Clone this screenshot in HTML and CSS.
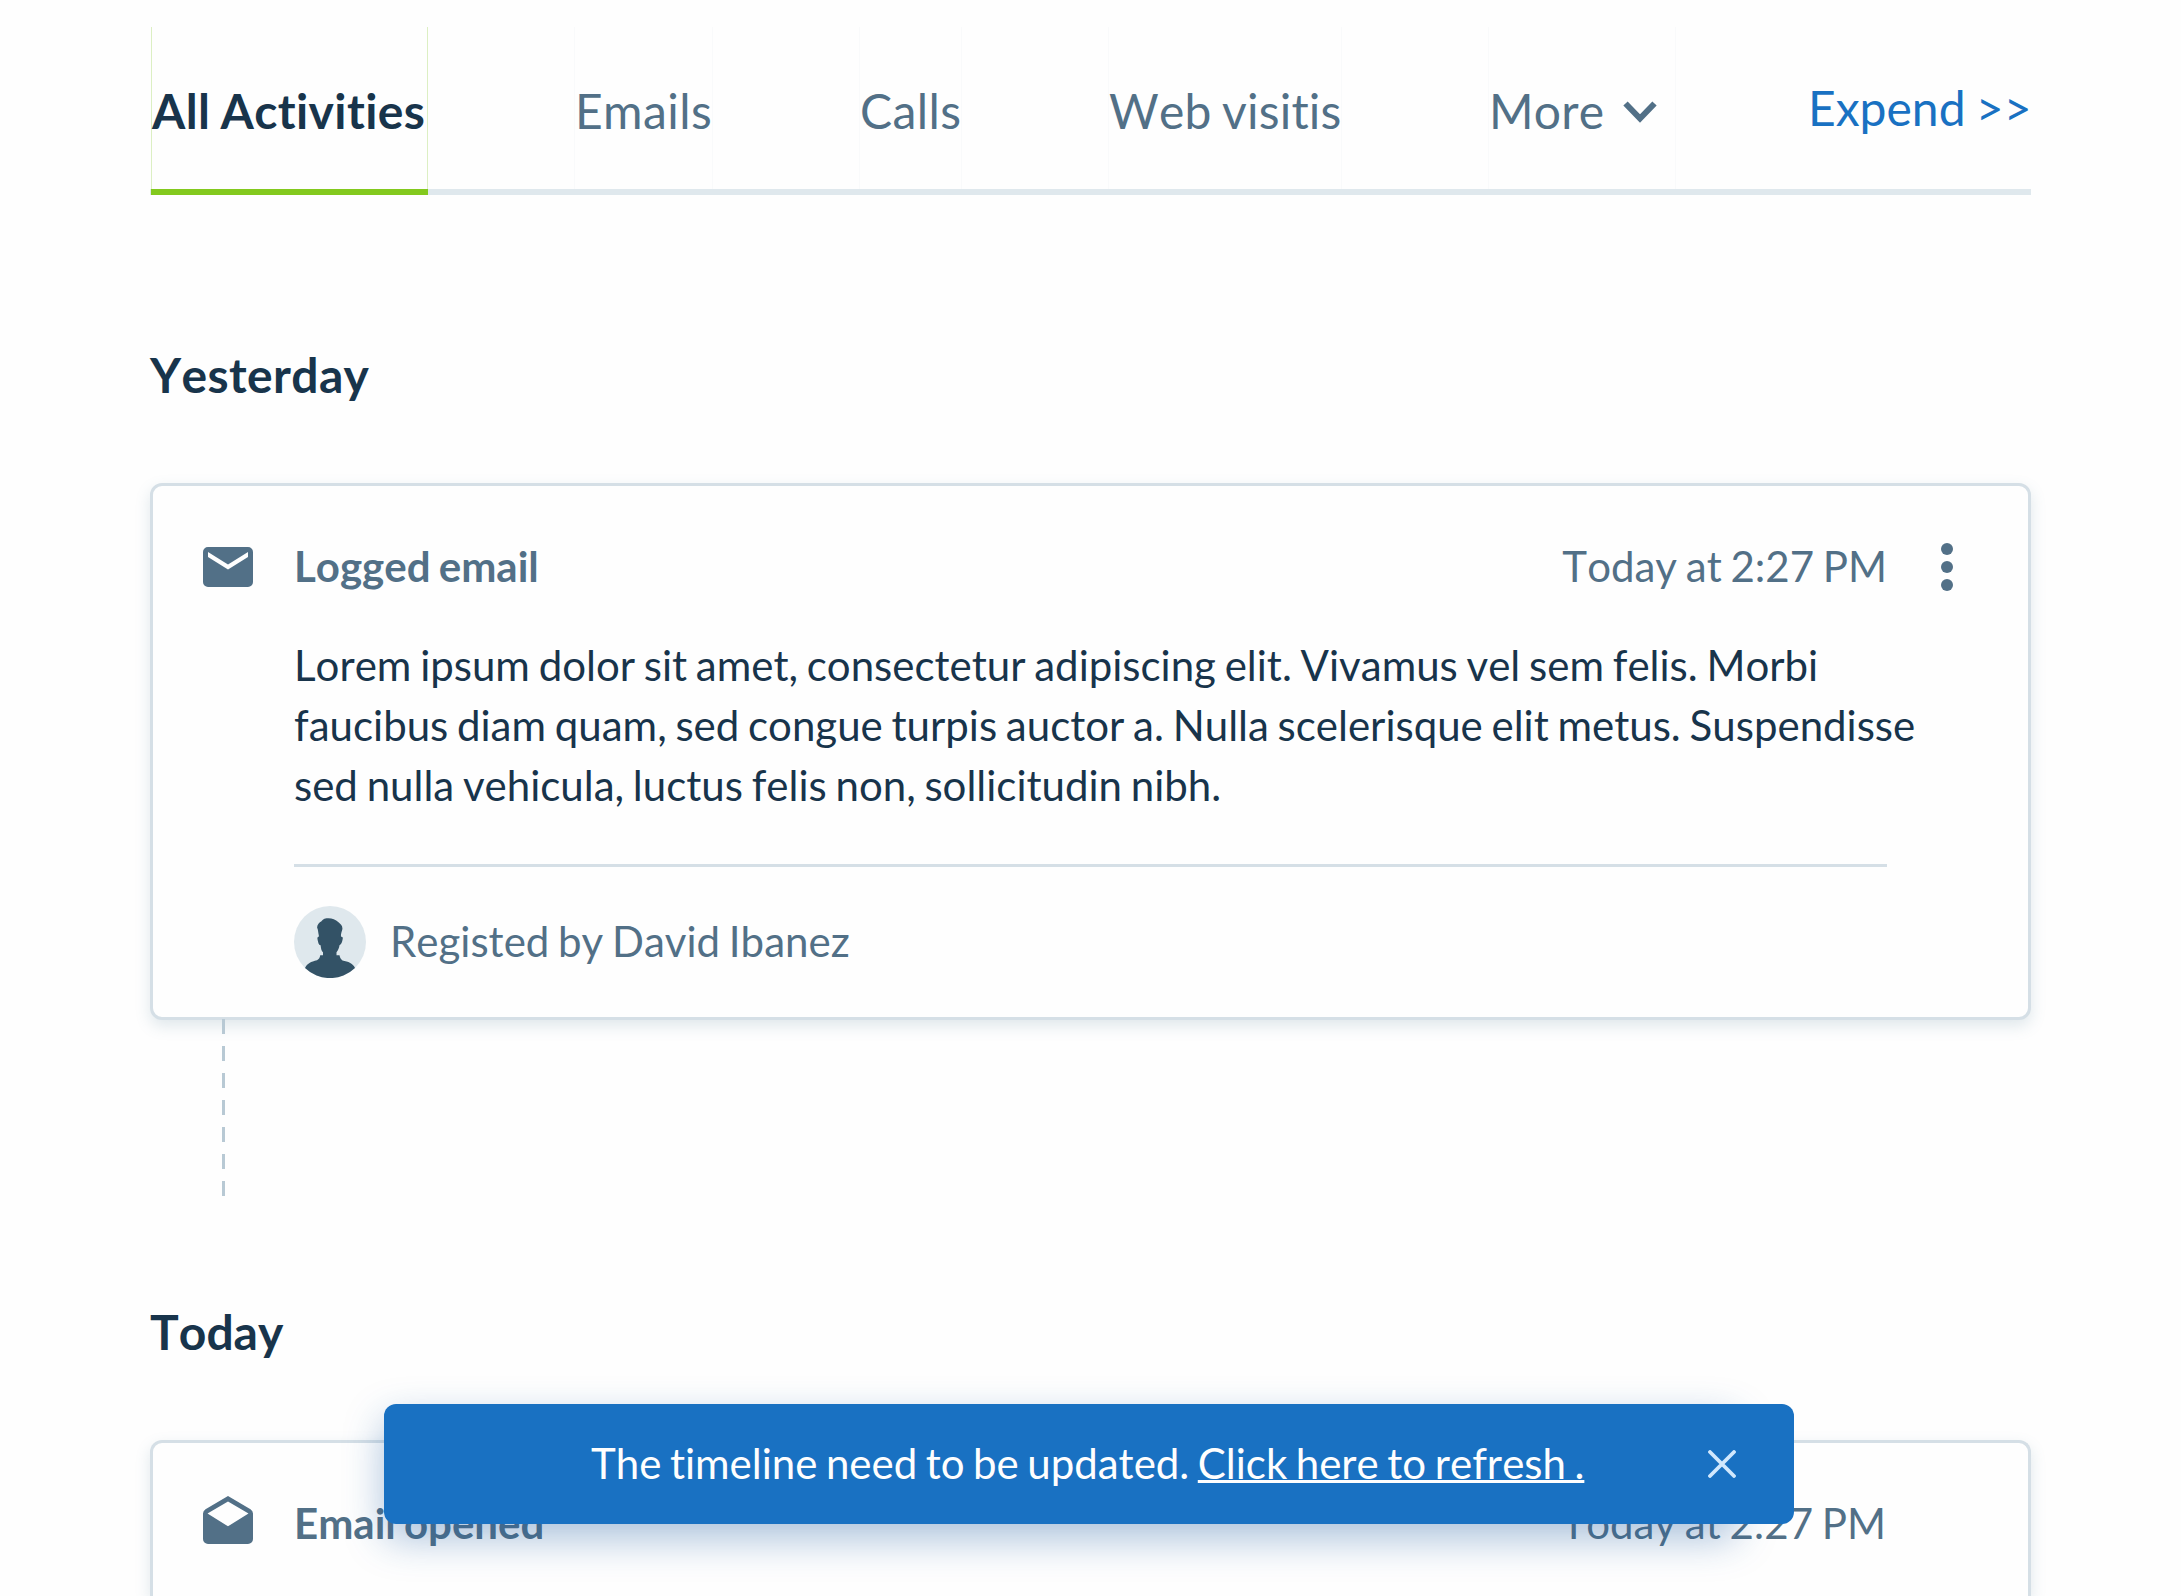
FILE: index.html
```html
<!DOCTYPE html>
<html lang="en">
<head>
<meta charset="utf-8">
<title>Activities</title>
<link rel="stylesheet" href="styles.css">
</head>
<body>
<main class="timeline">
  <nav class="tabs">
    <a class="tab all active"><span>All Activities</span></a>
    <a class="tab emails"><span>Emails</span></a>
    <a class="tab calls"><span>Calls</span></a>
    <a class="tab visits"><span>Web visitis</span></a>
    <a class="tab more"><span>More</span>
      <svg class="chevron" viewBox="0 0 34 22"><path d="M2.500 2.500 17 17.500 31.500 2.500" fill="none" stroke="currentColor" stroke-width="6"/></svg>
    </a>
    <a class="expand"><span>Expend &gt;&gt;</span></a>
  </nav>

  <h2 class="day yesterday">Yesterday</h2>
  <article class="card">
    <div class="icon">
      <svg width="50" height="40" viewBox="0 0 50 40"><path fill="currentColor" fill-rule="evenodd" d="M5 0H45a5 5 0 0 1 5 5V35a5 5 0 0 1-5 5H5a5 5 0 0 1-5-5V5a5 5 0 0 1 5-5ZM25 17.500 5 5V10L25 22.500 45 10V5Z"/></svg>
    </div>
    <div class="body">
      <header class="head">
        <h3 class="title">Logged email</h3>
        <time class="time">Today at 2:27 PM</time>
        <svg class="dots" width="12" height="48" viewBox="0 0 12 48" fill="currentColor"><circle cx="6" cy="6" r="6"/><circle cx="6" cy="24" r="6"/><circle cx="6" cy="42" r="6"/></svg>
      </header>
      <p class="text">Lorem ipsum dolor sit amet, consectetur adipiscing elit. Vivamus vel sem felis. Morbi<br>faucibus diam quam, sed congue turpis auctor a. Nulla scelerisque elit metus. Suspendisse<br>sed nulla vehicula, luctus felis non, sollicitudin nibh.</p>
      <footer class="author">
        <svg width="72" height="72" viewBox="0 0 72 72">
          <circle cx="36" cy="36" r="36" fill="#dfe8ed"/>
          <path fill="#335266" d="M34 12.3C30 12.4 28.500 13.800 27.500 15.300C25 16.500 22.700 19.500 23.200 22C24 23 24 25.500 25 30.500C22.500 31 23.500 33 24 35.500C24.500 38.500 25.500 39 26.600 39.200C27 43 27.500 45 29 46.300V49.200H26.200C26 51.500 25 53 23 54.200C17 55.500 13 57.500 11 62A36 36 0 0 0 61 62C59.500 57.500 54 55.300 48.500 54.400C47 53 46 52 45.500 49.200H42.500V46.300C44.500 43.500 45 42 45.500 39.200C47.500 38.500 48 36 48.700 33C49 31 48.500 31 47 30.800C46.800 28 47.500 26.500 48.300 23.500C49 19.500 46.500 18 44.500 16.200C41.500 13.500 38 12.200 34 12.300Z"/>
        </svg>
        <span class="name">Registed by David Ibanez</span>
      </footer>
    </div>
  </article>
  <svg class="connector" width="3" height="178" viewBox="0 0 3 178"><path d="M1.500 0V178" stroke="#b8c9d4" stroke-width="3" stroke-dasharray="15 12"/></svg>

  <h2 class="day today">Today</h2>
  <article class="card second">
    <div class="icon">
      <svg width="50" height="48" viewBox="0 0 50 48"><path fill="currentColor" fill-rule="evenodd" d="M25 0 47.500 13.300Q50 15 50 17.500V43a5 5 0 0 1-5 5H5a5 5 0 0 1-5-5V17.500Q0 15 2.500 13.300ZM25 5.500 4.500 17.500 25 30.300 45.500 17.500Z"/></svg>
    </div>
    <div class="body">
      <header class="head">
        <h3 class="title">Email opened</h3>
        <time class="time">Today at 2:27 PM</time>
      </header>
    </div>
  </article>
</main>

<div class="overlay">
  <div class="toast">
    <p class="message">The timeline need to be updated. <a class="refresh">Click here to refresh .</a></p>
    <svg class="close" width="28" height="28" viewBox="0 0 28 28"><path d="M2 2 26 26M26 2 2 26" stroke="#d1e8fd" stroke-width="3.800" stroke-linecap="round"/></svg>
  </div>
</div>
</body>
</html>
```

FILE: styles.css
```css
* { box-sizing: border-box; }

html {
  height: 1596px;
  overflow: hidden;
}

body {
  margin: 0;
  height: 1596px;
  overflow: hidden;
  position: relative;
  background: #fefefe;
  color: #18344b;
  font-family: Lato, sans-serif;
  font-size: 42px;
  font-kerning: none;
  font-variant-ligatures: none;
  word-spacing: -2px;
}

h2, h3, p { margin: 0; }

.timeline { padding: 27px 150px 0; }

.tabs {
  display: flex;
  gap: 146px;
  height: 168px;
  padding: 0 0 6px 1px;
  font-size: 48px;
  line-height: 60px;
  color: #527087;
  box-shadow: inset 0 -6px #dfe8ed;
}

.tab {
  display: flex;
  flex: none;
  padding: 54px 0 0;
  border: solid #f9fafb;
  border-width: 0 1px;
  letter-spacing: .4px;
  white-space: nowrap;
}

.tab.all { width: 277px; }
.tab.emails { width: 139px; }
.tab.calls { width: 103px; }
.tab.visits { width: 234px; letter-spacing: .2px; }
.tab.more { width: 188px; padding-right: 18px; letter-spacing: .2px; }

.tab.active {
  color: #18344b;
  font-weight: 700;
  border-color: #dcefc3;
  box-shadow: 0 6px #83c91e;
}

.chevron {
  width: 34px;
  height: 22px;
  margin: 20px 0 0 auto;
}

.expand {
  margin-left: -14px;
  padding-top: 51px;
  color: #1971c2;
  white-space: nowrap;
}

.day {
  margin-top: 150px;
  font-size: 48px;
  line-height: 60px;
  font-weight: 700;
}

.day.yesterday { letter-spacing: .35px; }

.card {
  display: flex;
  height: 537px;
  margin-top: 78px;
  padding: 51px 75px 0 50px;
  border: 3px solid #d5dfe6;
  border-radius: 12px;
  background: #fefefe;
  box-shadow: 0 6px 15px rgba(82, 130, 150, .18);
}

.icon {
  flex: 0 0 91px;
  padding-top: 10px;
  color: #527087;
}

.icon svg { display: block; }

.body { flex: 1; min-width: 0; }

.head {
  display: flex;
  align-items: center;
  height: 60px;
  color: #527087;
}

.title,
.time,
.name,
.message { padding-bottom: 2px; }

.title {
  flex: 1;
  font-size: 42px;
  font-weight: 700;
}

.time { margin-right: 55px; }

.dots { flex: none; margin-left: -1px; }

.text {
  margin-top: 38px;
  line-height: 60px;
  white-space: nowrap;
}

.author {
  display: flex;
  align-items: center;
  gap: 24px;
  width: 1593px;
  margin-top: 49px;
  padding-top: 39px;
  border-top: 3px solid #d5dfe6;
  color: #527087;
}

.connector {
  display: block;
  margin: -1px 0 0 72px;
}

.day.today { margin-top: 105px; }

.card.second {
  height: 156px;
  border-bottom: 0;
  border-radius: 12px 12px 0 0;
}

.card.second .icon { padding-top: 2px; }

.card.second .time { margin-right: 67px; }

.overlay {
  position: absolute;
  left: 384px;
  top: 1404px;
  width: 1410px;
  isolation: isolate;
}

.overlay::before {
  content: "";
  position: absolute;
  z-index: -1;
  inset: 0 57px 0 0;
  border-radius: 12px;
  box-shadow: 0 15px 39px rgba(25, 90, 160, .36);
}

.toast {
  display: flex;
  align-items: center;
  height: 120px;
  padding: 0 58px 0 207px;
  border-radius: 12px;
  background: #1971c2;
  color: #fefefe;
}

.message {
  flex: 1;
  line-height: 60px;
  white-space: nowrap;
  word-spacing: -2.25px;
}

.refresh {
  text-decoration: underline;
  text-decoration-thickness: 3px;
  text-underline-offset: 1px;
  text-decoration-skip-ink: none;
}
```
